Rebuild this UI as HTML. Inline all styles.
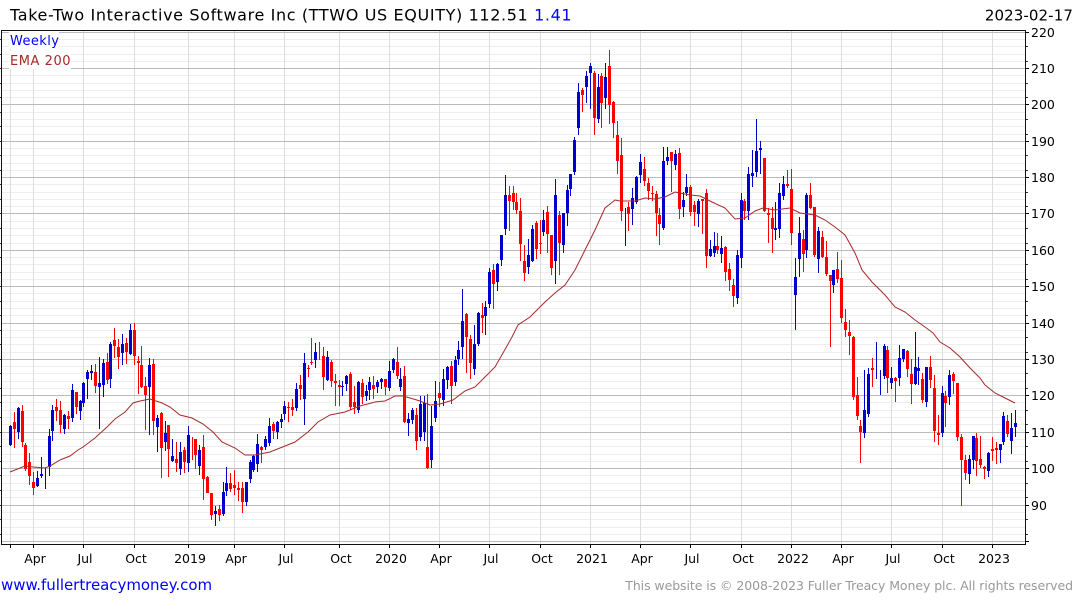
<!DOCTYPE html>
<html><head><meta charset="utf-8"><title>TTWO</title>
<style>html,body{margin:0;padding:0;background:#fff}svg{display:block}text{font-family:"DejaVu Sans","Liberation Sans",sans-serif}</style>
</head><body>
<svg width="1075" height="600" viewBox="0 0 1075 600" xmlns="http://www.w3.org/2000/svg">
<rect width="1075" height="600" fill="#fff"/>
<g shape-rendering="crispEdges" fill="none">
<path stroke="#eee" d="M2 39.5H1025M2 46.5H1025M2 54.5H1025M2 61.5H1025M2 75.5H1025M2 83.5H1025M2 90.5H1025M2 97.5H1025M2 112.5H1025M2 119.5H1025M2 126.5H1025M2 134.5H1025M2 148.5H1025M2 155.5H1025M2 163.5H1025M2 170.5H1025M2 184.5H1025M2 192.5H1025M2 199.5H1025M2 206.5H1025M2 221.5H1025M2 228.5H1025M2 235.5H1025M2 243.5H1025M2 257.5H1025M2 264.5H1025M2 272.5H1025M2 279.5H1025M2 293.5H1025M2 301.5H1025M2 308.5H1025M2 315.5H1025M2 330.5H1025M2 337.5H1025M2 344.5H1025M2 352.5H1025M2 366.5H1025M2 373.5H1025M2 381.5H1025M2 388.5H1025M2 402.5H1025M2 410.5H1025M2 417.5H1025M2 424.5H1025M2 439.5H1025M2 446.5H1025M2 454.5H1025M2 461.5H1025M2 475.5H1025M2 483.5H1025M2 490.5H1025M2 497.5H1025M2 512.5H1025M2 519.5H1025M2 527.5H1025M2 534.5H1025"/>
<path stroke="#ddd" d="M10.5 31V544M33.5 31V544M83.5 31V544M134.5 31V544M188.5 31V544M234.5 31V544M284.5 31V544M339.5 31V544M389.5 31V544M439.5 31V544M489.5 31V544M540.5 31V544M590.5 31V544M640.5 31V544M690.5 31V544M741.5 31V544M791.5 31V544M841.5 31V544M891.5 31V544M942.5 31V544M992.5 31V544"/>
<path stroke="#bbb" d="M2 32.5H1025M2 68.5H1025M2 104.5H1025M2 141.5H1025M2 177.5H1025M2 213.5H1025M2 250.5H1025M2 286.5H1025M2 323.5H1025M2 359.5H1025M2 395.5H1025M2 432.5H1025M2 468.5H1025M2 505.5H1025M2 541.5H1025"/>
</g>
<rect x="9" y="31" width="50" height="19" fill="#fff"/>
<rect x="9" y="51" width="62" height="18" fill="#fff"/>
<g shape-rendering="crispEdges" fill="none">
<path stroke="#00c" stroke-width="1" transform="translate(.5 0)" d="M10 425V446M18 407V439M37 471V487M41 457V478M45 468V489M49 429V476M52 405V441M64 414V434M72 384V422M80 400V420M83 382V407M87 370V399M91 365V380M99 357V429M103 359V397M110 342V388M122 334V365M130 324V355M149 358V435M157 415V452M165 421V451M172 439V462M180 442V475M188 426V472M199 445V475M215 506V526M223 482V516M226 467V496M246 482V506M250 460V483M253 455V472M257 434V472M265 436V450M269 418V446M277 421V439M281 414V428M284 401V420M296 383V411M304 353V425M315 343V368M327 351V381M342 381V396M346 375V391M358 381V413M366 385V401M369 377V400M377 380V393M381 378V389M389 361V391M393 358V373M400 368V391M408 413V436M412 408V424M420 396V441M424 396V441M431 406V468M435 381V422M443 369V406M447 366V389M455 356V386M458 341V365M462 289V359M474 325V375M478 312V346M485 301V335M489 268V308M497 263V291M501 235V266M505 175V235M528 239V274M532 225V262M543 210V236M555 179V284M563 213V253M567 185V226M570 174V196M574 137V175M578 83V135M586 71V103M590 63V109M598 74V123M605 63V109M625 208V246M632 188V225M636 176V204M640 154V183M663 147V230M667 147V165M675 150V170M683 192V217M686 174V196M698 199V227M710 240V257M714 232V257M721 236V263M737 250V304M741 193V268M748 167V220M752 150V187M756 119V177M760 141V174M775 202V240M779 183V238M783 176V200M795 258V330M799 217V277M806 193V258M818 227V273M833 270V293M864 370V438M868 368V417M876 342V379M880 370V395M884 344V379M891 367V389M899 345V386M903 349V362M915 332V385M918 357V385M926 367V407M942 386V437M949 370V405M969 455V484M973 436V469M988 452V477M1000 444V463M1003 412V445M1011 413V454M1015 410V437"/>
<path stroke="#00c" stroke-width="3" transform="translate(.5 0)" d="M10 426V445M18 408V432M37 478V486M41 474V476M49 436V467M52 410V431M64 415V429M72 390V418M80 401V411M83 383V403M87 372V379M91 371V373M99 383V387M103 363V385M110 344V379M122 344V353M130 330V354M149 365V387M157 418V427M165 433V442M172 456V461M180 452V469M188 435V463M199 450V466M215 511V514M223 492V514M226 483V491M246 482V502M250 462V479M253 456V470M257 444V464M265 439V447M269 426V443M277 422V432M281 419V422M284 406V414M296 389V408M304 363V399M315 352V360M327 357V380M342 386V387M346 376V384M358 382V410M366 391V396M369 382V390M377 382V387M381 379V382M389 371V388M393 359V370M400 379V387M408 419V423M412 410V420M420 404V437M424 403V432M431 426V460M435 401V418M443 379V400M447 367V380M455 360V382M458 350V359M462 321V347M474 344V369M478 313V344M485 307V316M489 272V304M497 264V282M501 235V260M505 195V229M528 255V267M532 229V261M543 220V232M555 195V261M563 213V245M567 190V213M570 174V189M574 140V172M578 92V128M586 76V87M590 66V73M598 87V119M605 77V98M632 198V209M636 177V202M640 162V175M663 161V228M667 157V161M675 154V165M683 200V207M686 187V193M698 201V214M710 249V256M714 246V253M721 248V254M737 255V298M741 200V258M748 174V211M752 173V176M756 151V172M760 148V150M775 228V230M779 193V229M783 184V196M795 277V295M799 233V259M806 195V250M818 231V259M833 270V285M864 410V433M868 374V414M884 346V376M891 378V383M899 358V378M903 349V359M915 367V384M918 368V371M926 367V402M942 393V433M949 375V397M969 459V474M973 436V460M988 453V471M1000 444V450M1003 416V442M1011 428V441M1015 423V427"/>
<path stroke="#f00" stroke-width="1" transform="translate(.5 0)" d="M14 412V448M22 405V447M25 443V471M29 453V485M33 472V495M56 399V421M60 401V433M68 411V429M76 392V414M95 364V393M107 353V384M114 328V358M118 339V369M126 338V364M134 323V365M138 356V394M141 346V388M145 377V430M153 359V435M161 412V478M168 425V477M176 442V472M184 447V473M192 437V460M195 439V469M203 435V500M207 476V493M211 493V520M219 505V521M230 473V492M234 470V495M238 482V501M242 482V513M261 446V463M273 422V439M288 402V422M292 399V416M300 375V400M308 365V377M311 338V365M319 342V360M323 347V390M331 360V387M335 374V406M339 380V406M350 372V410M354 386V414M362 379V404M373 376V399M385 379V395M397 347V379M404 366V423M416 408V450M427 394V469M439 382V407M451 361V404M466 313V373M470 335V379M482 303V333M493 264V309M509 186V231M513 186V210M516 193V214M520 198V261M524 245V281M536 221V259M540 220V254M547 206V253M551 235V275M559 211V275M582 88V112M594 71V135M601 73V128M609 50V124M613 101V138M617 121V174M621 138V221M628 202V231M644 157V186M648 178V200M652 186V201M656 191V236M659 208V245M671 152V192M679 148V219M690 185V216M694 201V226M702 199V234M706 189V268M717 233V254M725 246V281M729 263V291M733 279V307M744 199V220M764 158V212M768 208V243M772 207V253M787 170V188M791 169V245M803 230V272M810 183V209M814 207V257M822 231V258M826 241V276M830 275V347M837 252V283M841 260V323M845 309V337M849 320V355M853 336V400M857 377V420M860 420V463M872 358V387M887 346V393M895 377V402M907 350V377M911 359V404M922 373V403M930 356V388M934 375V442M938 415V445M945 391V427M953 372V394M957 383V441M961 434V506M965 455V480M976 433V476M980 436V468M984 466V479M992 437V461M996 442V464M1007 415V437"/>
<path stroke="#f00" stroke-width="3" transform="translate(.5 0)" d="M14 422V429M22 411V442M25 445V469M29 462V476M33 482V488M56 407V411M60 410V425M68 416V419M76 392V407M95 372V386M107 362V380M114 340V346M118 347V357M126 343V352M134 330V356M138 361V363M141 365V387M145 386V395M153 364V421M161 413V448M168 425V449M176 459V463M184 450V462M195 439V455M203 447V479M207 477V493M211 493V515M219 509V515M230 483V489M234 485V488M238 488V490M242 488V502M261 447V450M273 424V431M288 407V408M292 407V410M300 385V389M308 368V369M311 362V363M323 356V377M331 362V381M335 381V383M339 385V387M350 374V407M354 402V407M362 383V397M373 385V389M385 379V387M397 362V376M404 376V422M416 415V441M427 447V468M439 393V398M451 366V386M466 314V337M470 339V363M482 315V318M493 270V284M509 195V201M513 193V202M516 202V210M520 211V244M524 261V273M536 223V249M540 243V244M547 212V234M551 235V268M559 215V243M582 90V95M594 73V118M601 76V103M609 66V105M613 102V123M617 135V161M621 155V211M628 207V214M644 169V181M648 183V191M652 193V194M656 194V213M659 215V224M671 152V161M679 153V209M690 187V212M694 205V212M702 199V201M706 193V256M717 246V250M725 247V272M729 269V280M733 285V296M744 201V211M764 158V211M768 213V215M772 218V229M787 184V186M791 189V233M803 239V254M810 195V208M814 207V255M822 237V257M826 257V274M830 275V281M837 269V279M841 278V318M845 322V330M849 332V336M853 337V397M857 395V416M860 426V432M872 368V370M887 350V378M895 378V381M907 351V369M911 374V384M922 379V400M930 367V380M934 388V431M938 433V435M945 396V403M953 374V381M957 383V437M961 437V460M965 460V473M976 438V461M980 459V465M984 467V469M992 449V451M996 448V450M1007 421V434"/>
</g>
<path fill="none" stroke="#a52a2a" stroke-width="1" d="M10 472L25 466L33 467L45 468L50 466L60 460L70 456L78 450L83 447L95 438L107 427L115 419L125 412L133 403L140 401L150 399L162 403L170 407L180 415L192 418L203 424L213 432L222 442L235 448L245 455L255 455L270 452L280 448L295 442L308 432L318 422L330 415L345 412L355 408L360 406L375 402L385 401L395 396L403 396L410 398L420 401L430 405L440 404L453 400L465 391L475 387L485 377L495 367L503 353L512 337L518 325L530 317L545 302L555 293L565 285L575 270L585 250L595 230L605 208L615 200L620 201L635 201L645 198L655 199L665 197L675 192L690 195L700 196L712 202L725 208L735 219L745 218L755 211L763 208L775 210L790 208L800 213L815 215L825 220L835 227L845 235L855 253L862 270L872 282L885 295L895 307L905 312L915 320L925 327L933 333L940 342L950 348L960 357L970 368L980 378L985 385L995 393L1005 398L1015 403"/>
<g shape-rendering="crispEdges" fill="none" stroke="#000">
<path stroke="#111" d="M1.5 30.5H1025.5V544.5H1.5Z"/>
<path d="M10.5 545V548M33.5 545V548M83.5 545V548M134.5 545V548M188.5 545V548M234.5 545V548M284.5 545V548M339.5 545V548M389.5 545V548M439.5 545V548M489.5 545V548M540.5 545V548M590.5 545V548M640.5 545V548M690.5 545V548M741.5 545V548M791.5 545V548M841.5 545V548M891.5 545V548M942.5 545V548M992.5 545V548"/>
<path d="M1026 32.5H1029M1026 68.5H1029M1026 104.5H1029M1026 141.5H1029M1026 177.5H1029M1026 213.5H1029M1026 250.5H1029M1026 286.5H1029M1026 323.5H1029M1026 359.5H1029M1026 395.5H1029M1026 432.5H1029M1026 468.5H1029M1026 505.5H1029M1026 541.5H1029"/>
<path stroke="#333" d="M1026 46.5H1028M1026 61.5H1028M1026 83.5H1028M1026 97.5H1028M1026 119.5H1028M1026 134.5H1028M1026 155.5H1028M1026 170.5H1028M1026 192.5H1028M1026 206.5H1028M1026 228.5H1028M1026 243.5H1028M1026 264.5H1028M1026 279.5H1028M1026 301.5H1028M1026 315.5H1028M1026 337.5H1028M1026 352.5H1028M1026 373.5H1028M1026 388.5H1028M1026 410.5H1028M1026 424.5H1028M1026 446.5H1028M1026 461.5H1028M1026 483.5H1028M1026 497.5H1028M1026 519.5H1028M1026 534.5H1028"/>
<path stroke="#333" d="M0 39.5H1M0 54.5H1M0 68.5H1M0 83.5H1M0 97.5H1M0 112.5H1M0 126.5H1M0 141.5H1M0 155.5H1M0 170.5H1M0 184.5H1M0 199.5H1M0 213.5H1M0 228.5H1M0 243.5H1M0 257.5H1M0 272.5H1M0 286.5H1M0 301.5H1M0 315.5H1M0 330.5H1M0 344.5H1M0 359.5H1M0 373.5H1M0 388.5H1M0 402.5H1M0 417.5H1M0 432.5H1M0 446.5H1M0 461.5H1M0 475.5H1M0 490.5H1M0 505.5H1M0 519.5H1M0 534.5H1"/>
</g>
<text x="10" y="20.5" font-size="16" letter-spacing=".63" fill="#000">Take-Two Interactive Software Inc (TTWO US EQUITY) 112.51 <tspan fill="#00f">1.41</tspan></text>
<text x="1073" y="20.5" font-size="15" letter-spacing=".1" fill="#000" text-anchor="end">2023-02-17</text>
<text x="10" y="45" font-size="13" letter-spacing=".4" fill="#00f">Weekly</text>
<text x="10" y="65" font-size="13" letter-spacing=".55" fill="#a52a2a">EMA 200</text>
<g font-size="12.5" fill="#000">
<text x="1031" y="37">220</text><text x="1031" y="73">210</text><text x="1031" y="109">200</text><text x="1031" y="146">190</text><text x="1031" y="182">180</text><text x="1031" y="218">170</text><text x="1031" y="255">160</text><text x="1031" y="291">150</text><text x="1031" y="328">140</text><text x="1031" y="364">130</text><text x="1031" y="400">120</text><text x="1031" y="437">110</text><text x="1031" y="473">100</text><text x="1031" y="510">90</text>
</g>
<g font-size="12.5" fill="#000" text-anchor="middle">
<text x="35" y="563">Apr</text><text x="85" y="563">Jul</text><text x="136" y="563">Oct</text><text x="190" y="563">2019</text><text x="236" y="563">Apr</text><text x="286" y="563">Jul</text><text x="341" y="563">Oct</text><text x="391" y="563">2020</text><text x="441" y="563">Apr</text><text x="491" y="563">Jul</text><text x="542" y="563">Oct</text><text x="592" y="563">2021</text><text x="642" y="563">Apr</text><text x="692" y="563">Jul</text><text x="743" y="563">Oct</text><text x="793" y="563">2022</text><text x="843" y="563">Apr</text><text x="893" y="563">Jul</text><text x="944" y="563">Oct</text><text x="994" y="563">2023</text>
</g>
<text x="1" y="590" font-size="15" letter-spacing="-.04" fill="#00f">www.fullertreacymoney.com</text>
<text x="1073" y="590" font-size="12.5" letter-spacing="-.07" fill="#999" text-anchor="end">This website is © 2008-2023 Fuller Treacy Money plc. All rights reserved</text>
</svg>
</body></html>
